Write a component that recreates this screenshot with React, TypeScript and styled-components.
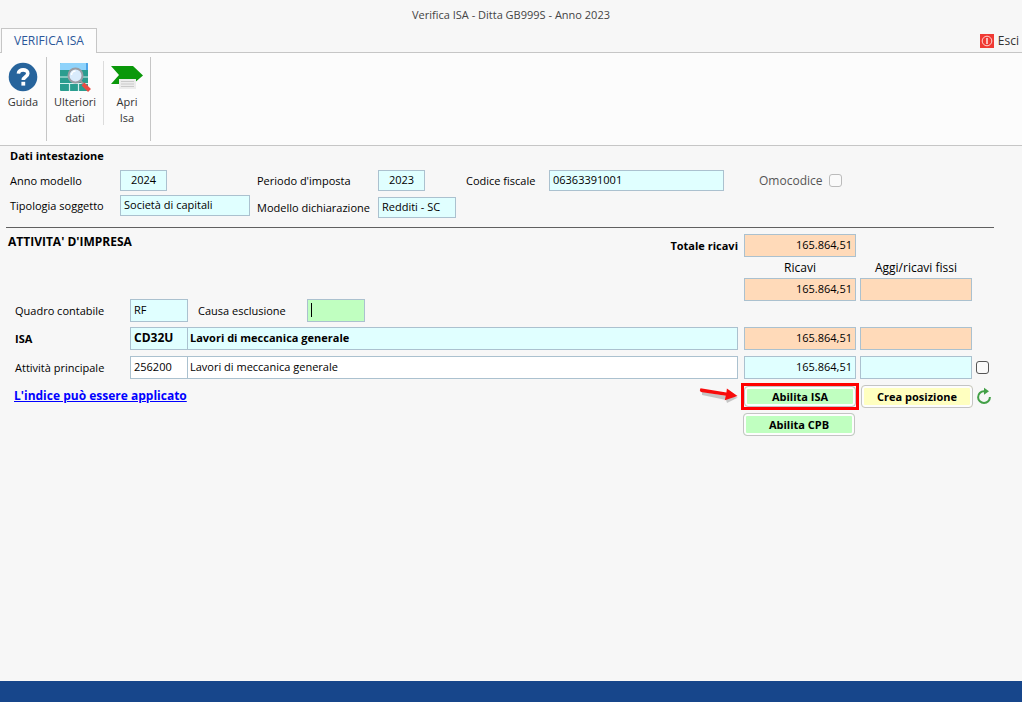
import React from "react";
import styled, { createGlobalStyle } from "styled-components";

const tones = {
  cyan: "#e0ffff",
  peach: "#ffdab9",
  green: "#c0ffc0",
  yellow: "#ffffc0",
  white: "#ffffff",
};
type Tone = keyof typeof tones;

const GlobalStyle = createGlobalStyle`
  * { box-sizing: border-box; }
  body { margin: 0; background: #f7f7f7; }
  body, input, button {
    font-family: "Open Sans", "Noto Sans", sans-serif;
    font-size: 11px;
    line-height: 16px;
    color: #000;
  }
`;

const Page = styled.div`
  min-height: 100vh;
  display: flex;
  flex-direction: column;
`;

const TitleBar = styled.header`
  height: 28px;
  padding-top: 7px;
  text-align: center;
  color: #444;
`;

const TabStrip = styled.nav`
  height: 25px;
  display: flex;
  justify-content: space-between;
  align-items: stretch;
  padding: 0 3px 0 1px;
  border-bottom: 1px solid #c6c6c6;
`;

const Tab = styled.button`
  width: 96px;
  margin-bottom: -1px;
  padding: 0;
  border: 1px solid #c6c6c6;
  border-bottom: 0;
  background: #fcfcfc;
  font-size: 12px;
  color: #2b579a;
`;

const ExitButton = styled.button`
  display: flex;
  align-items: center;
  gap: 4px;
  padding: 1px 0 0;
  border: 0;
  background: none;
  font-size: 12px;
  color: #333;
`;

const Ribbon = styled.div`
  display: flex;
  height: 93px;
  padding: 4px 0;
  border-bottom: 1px solid #c6c6c6;
  background: #fcfcfc;
`;

const RibbonGroup = styled.div`
  display: flex;
  border-right: 1px solid #c6c6c6;
`;

const RibbonButton = styled.button<{ $width: number; $divided?: boolean }>`
  width: ${(p) => p.$width}px;
  height: 64px;
  margin-top: 4px;
  padding: 0;
  display: flex;
  flex-direction: column;
  align-items: center;
  gap: 1px;
  border: 0;
  border-right: ${(p) => (p.$divided ? "1px solid #dcdcdc" : "0")};
  background: none;
  color: #333;

  svg { flex: none; }
`;

const Main = styled.main`
  flex: 1;
  padding: 2px 28px 0 6px;
`;

const Heading = styled.h2<{ $inset: number; $size: number }>`
  margin: 0;
  padding-left: ${(p) => p.$inset}px;
  font-size: ${(p) => p.$size}px;
  line-height: 16px;
  font-weight: 700;
`;

const HeaderData = styled.section`
  padding-bottom: 9px;
  border-bottom: 1px solid #606060;
`;

const HeaderGroups = styled.div`
  display: flex;
  align-items: flex-start;
  padding: 6px 0 0 4px;
`;

const FieldColumn = styled.div<{ $width: number; $gap: number }>`
  display: flex;
  flex-direction: column;
  gap: ${(p) => p.$gap}px;
  width: ${(p) => p.$width}px;
`;

const FieldLine = styled.div`
  display: flex;
  align-items: center;
  height: 21px;
`;

const Label = styled.label<{ $width?: number; $strong?: boolean; $muted?: boolean }>`
  flex: none;
  ${(p) => (p.$width ? `width: ${p.$width}px;` : "")}
  font-size: ${(p) => (p.$muted ? 12 : 11)}px;
  font-weight: ${(p) => (p.$strong ? 700 : 400)};
  color: ${(p) => (p.$muted ? "#555" : "#000")};
  white-space: nowrap;
`;

const Field = styled.input<{
  $tone: Tone;
  $width?: number;
  $height?: number;
  $align?: "left" | "center" | "right";
  $strong?: boolean;
  $joined?: boolean;
}>`
  ${(p) => (p.$width ? `flex: none; width: ${p.$width}px;` : "flex: 1; min-width: 0;")}
  height: ${(p) => p.$height ?? 23}px;
  padding: 0 3px 2px;
  border: 1px solid #abc1cf;
  ${(p) => (p.$joined ? "border-left: 0; padding-left: 2px;" : "")}
  border-radius: 0;
  outline: 0;
  background: ${(p) => tones[p.$tone]};
  text-align: ${(p) => p.$align ?? "left"};
  font-weight: ${(p) => (p.$strong ? 700 : 400)};
`;

const CodeField = styled(Field)`
  font-size: 12px;
`;

const Check = styled.input`
  appearance: none;
  flex: none;
  width: 13px;
  height: 13px;
  margin: 0;
  border: 1px solid #555;
  border-radius: 3px;
  background: #fafafa;

  &:disabled { border-color: #bbb; }
`;

const Business = styled.section`
  padding-top: 6px;
`;

const Overview = styled.div`
  display: flex;
  justify-content: space-between;
  height: 88px;
`;

const OverviewLeft = styled.div`
  display: flex;
  flex-direction: column;
  justify-content: space-between;
`;

const Totals = styled.div`
  display: grid;
  grid-template-columns: auto 112px 112px;
  grid-template-rows: 23px 21px 23px;
  column-gap: 4px;
  align-items: center;
  padding-right: 22px;
`;

const TotalLabel = styled(Label)`
  padding-right: 2px;
`;

const ColumnTitle = styled.span<{ $from: number }>`
  grid-column: ${(p) => p.$from};
  font-size: 12px;
  text-align: center;
`;

const AmountField = styled(Field)<{ $from: number }>`
  grid-column: ${(p) => p.$from};
`;

const ExclusionLabel = styled(Label)`
  margin-left: 10px;
`;

const CaretBox = styled.div`
  position: relative;
  display: flex;

  &::after {
    content: "";
    position: absolute;
    left: 4px;
    top: 4px;
    width: 1px;
    height: 14px;
    background: #000;
  }
`;

const Description = styled.div`
  display: flex;
  padding-right: 6px;
`;

const Line = styled.div`
  display: flex;
  align-items: center;
  padding-left: 9px;
`;

const Row = styled.div`
  display: grid;
  grid-template-columns: 115px minmax(0, 1fr) 250px;
  margin-top: 5px;
  padding-left: 9px;
  align-items: center;

  & + & { margin-top: 6px; }
`;

const AmountGroup = styled.div`
  display: flex;
  align-items: center;
  gap: 4px;
`;

const Actions = styled.div`
  display: flex;
  align-items: flex-start;
  justify-content: space-between;
  margin-top: 4px;
  padding-left: 8px;
`;

const StatusLink = styled.a`
  margin-top: 4px;
  font-size: 12px;
  line-height: 18px;
  font-weight: 700;
  color: #0000ff;
`;

const ActionGroup = styled.div`
  display: flex;
  align-items: flex-start;
`;

const ActionStack = styled.div`
  display: flex;
  flex-direction: column;
  align-items: flex-start;
  gap: 3px;
`;

const ActionButton = styled.button<{ $tone: Tone }>`
  width: 112px;
  height: 23px;
  padding: 0;
  border: 1px solid #c4c4c4;
  border-radius: 4px;
  background: ${(p) => tones[p.$tone]};
  box-shadow: inset 0 0 0 2px #fdfdfd;
  font-weight: 700;
`;

const Highlight = styled.div`
  display: flex;
  border: 3px solid #ff0000;

  ${ActionButton} { height: 21px; }
`;

const SideActions = styled.div`
  display: flex;
  align-items: center;
  gap: 3px;
  width: 133px;
  margin: 2px 0 0 2px;
`;

const StackedButton = styled.div`
  padding-left: 2px;
`;

const IconButton = styled.button`
  display: flex;
  padding: 0 0 2px;
  border: 0;
  background: none;
`;

const StatusBar = styled.footer`
  height: 21px;
  background: #17468b;
`;

const HelpIcon = () => (
  <svg width="32" height="32" viewBox="0 0 32 32" aria-hidden="true">
    <circle cx="16" cy="16" r="14.3" fill="#27649c" />
    <path d="M11.4 12.6c.2-5 9.400-5 9.400 0 0 3.200-4.500 3-4.500 6.400" fill="none" stroke="#fff" strokeWidth="3.600" />
    <rect x="14.400" y="20.800" width="3.800" height="3.800" fill="#fff" />
  </svg>
);

const DataIcon = () => (
  <svg width="32" height="32" viewBox="0 0 32 32" aria-hidden="true">
    <rect x="1" y="2" width="28" height="28" rx="1" fill="#2a9d8f" />
    <path d="M1 9V3q0-1 1-1h26q1 0 1 1v6z" fill="#8fd3fb" />
    <path d="M27 2h1q1 0 1 1v6h-2z" fill="#4da3e8" />
    <path d="M1 16h28M1 22.500h28M10.500 22.500v7.500M19.500 22.500v7.500" stroke="#d5f0ee" strokeWidth="1.200" />
    <path d="M21 19.500l4 4" stroke="#999" strokeWidth="2" />
    <path d="M24 23l6.500 6.500" stroke="#e94b43" strokeWidth="4" />
    <circle cx="16.500" cy="14.500" r="7" fill="#d9ebfc" stroke="#9a9da4" strokeWidth="2" />
    <path d="M12.500 14a4 4 0 0 1 4-4" fill="none" stroke="#fff" strokeWidth="1.500" />
  </svg>
);

const OpenIcon = () => (
  <svg width="34" height="32" viewBox="0 0 34 32" aria-hidden="true">
    <path d="M1 5h22l10 9.500-10 8.500H1l8-9z" fill="#0a980a" />
    <path d="M9 18h17v10H9z" fill="#ececec" />
    <path d="M11 20.500h13M11 23h13M11 25.500h13" stroke="#cacaca" strokeWidth="1" />
  </svg>
);

const PowerIcon = () => (
  <svg width="14" height="14" viewBox="0 0 14 14" aria-hidden="true">
    <rect width="14" height="14" fill="#f03a34" />
    <circle cx="7" cy="7" r="4.800" fill="none" stroke="#ffd2cf" strokeWidth="1" />
    <path d="M7 4v6" stroke="#fff" strokeWidth="1.300" />
  </svg>
);

const ArrowIcon = () => (
  <svg width="42" height="24" viewBox="0 0 42 24" aria-hidden="true">
    <path d="M3 8.500l24 4.500 12 1.500-11 5.500-1-3L3 12z" fill="#000" opacity=".2" />
    <path d="M1.500 5.200q-1.500 2 .3 3.800l25 3.700-1 4.600 12.700-4.300-10.600-7.600-.5 4.100z" fill="#f80c0c" />
  </svg>
);

const RefreshIcon = () => (
  <svg width="16" height="18" viewBox="0 0 16 18" aria-hidden="true">
    <path d="M9.500 4.200H8A5.900 5.900 0 1 0 13.900 10" fill="none" stroke="#43a047" strokeWidth="2" />
    <path d="M8 .8l5 3.500-5 3.500z" fill="#43a047" />
  </svg>
);

export default function App() {
  return (
    <Page>
      <GlobalStyle />
      <TitleBar>Verifica ISA - Ditta GB999S - Anno 2023</TitleBar>
      <TabStrip>
        <Tab>VERIFICA ISA</Tab>
        <ExitButton>
          <PowerIcon />
          Esci
        </ExitButton>
      </TabStrip>
      <Ribbon>
        <RibbonGroup>
          <RibbonButton $width={46}>
            <HelpIcon />
            Guida
          </RibbonButton>
        </RibbonGroup>
        <RibbonGroup>
          <RibbonButton $width={57} $divided>
            <DataIcon />
            <span>Ulteriori<br />dati</span>
          </RibbonButton>
          <RibbonButton $width={46}>
            <OpenIcon />
            <span>Apri<br />Isa</span>
          </RibbonButton>
        </RibbonGroup>
      </Ribbon>

      <Main>
        <HeaderData>
          <Heading $inset={4} $size={11}>Dati intestazione</Heading>
          <HeaderGroups>
            <FieldColumn $width={247} $gap={4}>
              <FieldLine>
                <Label htmlFor="anno" $width={110}>Anno modello</Label>
                <Field id="anno" $tone="cyan" $width={47} $height={21} $align="center" defaultValue="2024" readOnly />
              </FieldLine>
              <FieldLine>
                <Label htmlFor="tipo" $width={110}>Tipologia soggetto</Label>
                <Field id="tipo" $tone="cyan" $width={130} $height={21} defaultValue="Società di capitali" readOnly />
              </FieldLine>
            </FieldColumn>
            <FieldColumn $width={209} $gap={6}>
              <FieldLine>
                <Label htmlFor="periodo" $width={121}>Periodo d'imposta</Label>
                <Field id="periodo" $tone="cyan" $width={47} $height={21} $align="center" defaultValue="2023" readOnly />
              </FieldLine>
              <FieldLine>
                <Label htmlFor="modello" $width={121}>Modello dichiarazione</Label>
                <Field id="modello" $tone="cyan" $width={78} $height={21} defaultValue="Redditi - SC" readOnly />
              </FieldLine>
            </FieldColumn>
            <FieldColumn $width={293} $gap={4}>
              <FieldLine>
                <Label htmlFor="cf" $width={83}>Codice fiscale</Label>
                <Field id="cf" $tone="cyan" $width={175} $height={21} defaultValue="06363391001" readOnly />
              </FieldLine>
            </FieldColumn>
            <FieldLine>
              <Label htmlFor="omocodice" $width={70} $muted>Omocodice</Label>
              <Check id="omocodice" type="checkbox" disabled />
            </FieldLine>
          </HeaderGroups>
        </HeaderData>

        <Business>
          <Overview>
            <OverviewLeft>
              <Heading $inset={2} $size={12}>ATTIVITA' D'IMPRESA</Heading>
              <Line>
                <Label htmlFor="quadro" $width={115}>Quadro contabile</Label>
                <Field id="quadro" $tone="cyan" $width={58} defaultValue="RF" readOnly />
                <ExclusionLabel htmlFor="causa" $width={109}>Causa esclusione</ExclusionLabel>
                <CaretBox>
                  <Field id="causa" $tone="green" $width={58} />
                </CaretBox>
              </Line>
            </OverviewLeft>
            <Totals>
              <TotalLabel htmlFor="totale" $strong>Totale ricavi</TotalLabel>
              <AmountField id="totale" $from={2} $tone="peach" $width={112} $align="right" defaultValue="165.864,51" readOnly />
              <ColumnTitle $from={2}>Ricavi</ColumnTitle>
              <ColumnTitle $from={3}>Aggi/ricavi fissi</ColumnTitle>
              <AmountField $from={2} $tone="peach" $width={112} $align="right" aria-label="Ricavi" defaultValue="165.864,51" readOnly />
              <AmountField $from={3} $tone="peach" $width={112} $align="right" aria-label="Aggi/ricavi fissi" readOnly />
            </Totals>
          </Overview>

          <Row>
            <Label htmlFor="isa" $strong>ISA</Label>
            <Description>
              <CodeField id="isa" $tone="cyan" $width={58} $strong defaultValue="CD32U" readOnly />
              <Field $tone="cyan" $joined $strong aria-label="Descrizione ISA" defaultValue="Lavori di meccanica generale" readOnly />
            </Description>
            <AmountGroup>
              <Field $tone="peach" $width={112} $align="right" aria-label="Ricavi ISA" defaultValue="165.864,51" readOnly />
              <Field $tone="peach" $width={112} $align="right" aria-label="Aggi ISA" readOnly />
            </AmountGroup>
          </Row>
          <Row>
            <Label htmlFor="attivita">Attività principale</Label>
            <Description>
              <Field id="attivita" $tone="white" $width={58} defaultValue="256200" readOnly />
              <Field $tone="white" $joined aria-label="Descrizione attività" defaultValue="Lavori di meccanica generale" readOnly />
            </Description>
            <AmountGroup>
              <Field $tone="cyan" $width={112} $align="right" aria-label="Ricavi attività" defaultValue="165.864,51" readOnly />
              <Field $tone="cyan" $width={112} $align="right" aria-label="Aggi attività" readOnly />
              <Check type="checkbox" aria-label="Seleziona attività" />
            </AmountGroup>
          </Row>

          <Actions>
            <StatusLink href="#indice">L'indice può essere applicato</StatusLink>
            <ActionGroup>
              <ArrowIcon />
              <ActionStack>
                <Highlight>
                  <ActionButton $tone="green">Abilita ISA</ActionButton>
                </Highlight>
                <StackedButton>
                  <ActionButton $tone="green">Abilita CPB</ActionButton>
                </StackedButton>
              </ActionStack>
              <SideActions>
                <ActionButton $tone="yellow">Crea posizione</ActionButton>
                <IconButton aria-label="Aggiorna">
                  <RefreshIcon />
                </IconButton>
              </SideActions>
            </ActionGroup>
          </Actions>
        </Business>
      </Main>
      <StatusBar />
    </Page>
  );
}
